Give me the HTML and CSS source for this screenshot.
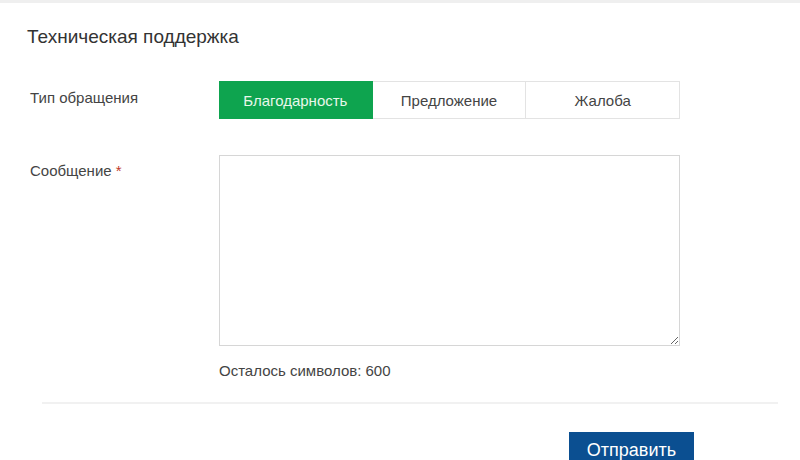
FILE: index.html
```html
<!DOCTYPE html>
<html lang="ru">
<head>
  <meta charset="UTF-8" />
  <title>Техническая поддержка</title>
  <link rel="stylesheet" href="styles.css">
</head>
<body>
  <div class="panel">
    <h1>Техническая поддержка</h1>

    <div class="row type-row">
      <div class="label">Тип обращения</div>
      <div class="segments">
        <button class="seg active">Благодарность</button>
        <button class="seg">Предложение</button>
        <button class="seg">Жалоба</button>
      </div>
    </div>

    <div class="row msg-row">
      <div class="label">Сообщение <span class="req">*</span></div>
      <div class="field">
        <textarea class="message"></textarea>
        <div class="counter">Осталось символов: 600</div>
      </div>
    </div>

    <div class="divider"></div>

    <div class="actions">
      <button class="submit">Отправить</button>
    </div>
  </div>
</body>
</html>
```

FILE: styles.css
```css
body {
  margin: 0;
  font-family: "Liberation Sans", Arial, sans-serif;
  background: #fff;
  color: #444;
}
.panel {
  border-top: 3px solid #efefef;
  padding: 0 22px 0 27px;
}
h1 {
  margin: 22px 0 0;
  font-size: 19px;
  font-weight: normal;
  color: #333;
  line-height: 24px;
}
.row {
  display: flex;
}
.label {
  width: 189px;
  padding-left: 3px;
  font-size: 15px;
  color: #444;
}
.type-row {
  margin-top: 32px;
}
.type-row .label {
  line-height: 34px;
}
.segments {
  display: flex;
  width: 461px;
  height: 38px;
}
.seg {
  flex: 1;
  border: 1px solid #e3e3e3;
  border-left: none;
  background: #fff;
  font-family: inherit;
  font-size: 15px;
  color: #444;
  padding: 0;
}
.seg:last-child {
  border-right: 1px solid #e3e3e3;
}
.seg.active {
  background: #0ea44f;
  border-color: #0ea44f;
  color: #e8f7ea;
}
.msg-row {
  margin-top: 36px;
}
.msg-row .label {
  padding-top: 7px;
}
.req {
  color: #c0392b;
}
.message {
  display: block;
  box-sizing: border-box;
  width: 461px;
  height: 191px;
  margin: 0;
  border: 1px solid #d6d6d6;
  resize: vertical;
}
.counter {
  margin-top: 16px;
  font-size: 15px;
  color: #444;
}
.divider {
  margin: 23px 0 0 15px;
  border-top: 2px solid #f1f1f1;
}
.actions {
  padding-left: 542px;
  margin-top: 28px;
}
.submit {
  width: 125px;
  height: 40px;
  border: none;
  background: #0b4f91;
  color: #fff;
  font-family: inherit;
  font-size: 18px;
  padding: 0 0 4px;
}
```
